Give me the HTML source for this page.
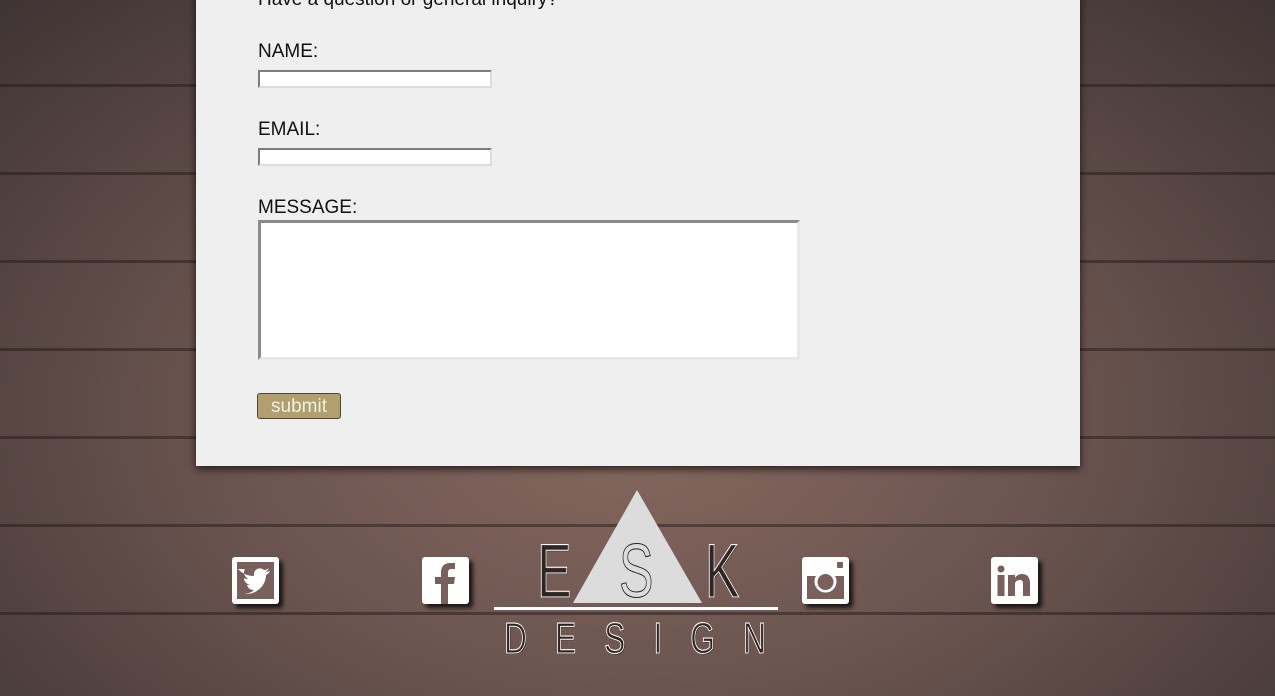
<!DOCTYPE html>
<html><head><meta charset="utf-8"><style>
html,body{margin:0;padding:0;width:1275px;height:696px;overflow:hidden}
body{position:relative;font-family:"Liberation Sans",sans-serif;
background:
repeating-linear-gradient(180deg,rgba(0,0,0,0) 0 84px,rgba(30,20,20,.45) 84px 87px,rgba(0,0,0,0) 87px 88px),
radial-gradient(ellipse at 50% 60%,#86695f 0%,#6c5550 45%,#3e3433 100%);}
.panel{position:absolute;left:196px;top:-10px;width:884px;height:476px;background:#efefef;box-shadow:0 3px 8px rgba(0,0,0,.7)}
.t{position:absolute;font-size:19px;color:#111}
.in{position:absolute;left:258px;width:230px;height:14px;background:#fff;border-top:2px solid #7d7d7d;border-left:2px solid #7d7d7d;border-right:2px solid #ddd;border-bottom:2px solid #ddd}
.ta{position:absolute;left:258px;top:220px;width:536px;height:134px;background:#fff;border-top:3px solid #8a8a8a;border-left:3px solid #8a8a8a;border-right:3px solid #e8e8e8;border-bottom:3px solid #e8e8e8}
.btn{position:absolute;left:257px;top:393px;width:82px;height:24px;background:#b19f6f;border:1px solid #4f4530;border-radius:3px;color:#f3f0e6;font-size:19px;text-align:center;line-height:26px}
.ic{position:absolute;top:557px;width:47px;height:47px;filter:drop-shadow(4px 4px 2px rgba(0,0,0,.75))}
.L{position:absolute;color:transparent;-webkit-text-stroke:1px #fff;text-shadow:1px 1px 0 rgba(0,0,0,.6);transform-origin:0 0;line-height:1}
</style></head><body>
<div class="panel"></div>
<div class="t" style="left:258px;top:-11px">Have a question or general inquiry?</div>
<div class="t" style="left:258px;top:41px">NAME:</div>
<div class="in" style="top:70px"></div>
<div class="t" style="left:258px;top:119px">EMAIL:</div>
<div class="in" style="top:148px"></div>
<div class="t" style="left:258px;top:197px">MESSAGE:</div>
<div class="ta"></div>
<div class="btn">submit</div>

<svg class="ic" style="left:232px" viewBox="0 0 47 47"><rect width="47" height="47" rx="3" fill="#fff"/><rect x="5" y="5" width="37" height="37" fill="#7a605a"/><path d="M6 12c5 5 10 7 16 7-1-6 5-10 10-6 2 0 4-1 5-2-1 2-2 3-3 4 2 0 3-1 4-1-1 2-2 3-4 4 0 10-9 20-22 19 4 0 8-2 10-4-4 0-6-2-7-5h3c-4-1-6-4-6-7 1 1 2 1 4 1-4-3-5-7-3-10z" fill="#fff"/></svg>
<svg class="ic" style="left:422px" viewBox="0 0 47 47"><rect width="47" height="47" rx="3" fill="#fff"/><path d="M19 47V27h-6v-7h6v-5c0-6 4-9 9-9 3 0 5 0 5 0v6h-3c-3 0-4 1-4 4v4h7l-1 7h-6v20z" fill="#7a605a"/></svg>
<svg class="ic" style="left:802px" viewBox="0 0 47 47"><rect width="47" height="47" rx="3" fill="#fff"/><path d="M5 19h9a11 11 0 1 0 19 0h9v23H5z" fill="#7a605a"/><circle cx="23.5" cy="25" r="8" fill="#7a605a"/><rect x="35" y="5" width="6" height="6" rx="1" fill="#7a605a"/></svg>
<svg class="ic" style="left:991px" viewBox="0 0 47 47"><rect width="47" height="47" rx="3" fill="#fff"/><circle cx="10" cy="12" r="3.5" fill="#7a605a"/><rect x="6.5" y="18" width="7" height="21" fill="#7a605a"/><path d="M17 18h7v3c2-3 4-4 7-4 5 0 8 3 8 9v13h-7V27c0-3-1-4-3-4s-5 1-5 4v12h-7z" fill="#7a605a"/></svg>

<svg style="position:absolute;left:494px;top:488px" width="290" height="170">
<polygon points="143,2 79,115 208,115" fill="#dcdcdc"/>
<rect x="0" y="119" width="284" height="3" fill="#fff"/>
</svg>
<div class="L" style="left:537px;top:534px;font-size:76px;transform:scaleX(.68)">E</div>
<div class="L" style="left:619px;top:534px;font-size:76px;transform:scaleX(.68);-webkit-text-stroke:1px #222;text-shadow:none">S</div>
<div class="L" style="left:705px;top:534px;font-size:76px;transform:scaleX(.68)">K</div>
<div class="L" style="left:504px;top:617px;font-size:44px;letter-spacing:39px;transform:scaleX(.72)">DESIGN</div>
</body></html>
